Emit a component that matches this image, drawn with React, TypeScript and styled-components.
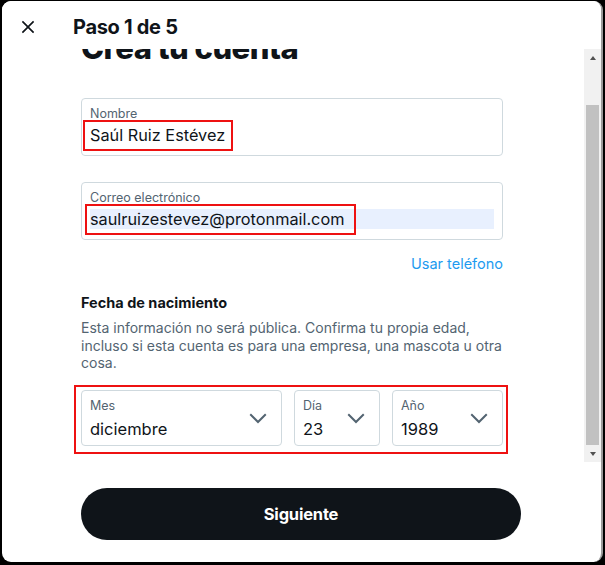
import React from "react";
import styled, { createGlobalStyle } from "styled-components";

const Global = createGlobalStyle`
  html, body { margin: 0; padding: 0; background: #000; }
  body { font-family: Inter, "Noto Sans", "Liberation Sans", sans-serif; color: #0f1419; }
  * { box-sizing: border-box; }
`;

const Dialog = styled.div`
  margin: 1px 2px 3px 2px;
  height: 561px;
  background: #fff;
  border-radius: 9px;
  border-right: 2px solid #9a9a9a;
  display: flex;
  flex-direction: column;
  overflow: hidden;
`;

const Header = styled.div`
  height: 48px;
  flex: none;
  display: flex;
  align-items: center;
  padding: 4px 0 0 16px;
  gap: 35px;
  background: #fff;
`;

const CloseButton = styled.button`
  width: 20px;
  height: 20px;
  padding: 0;
  border: 0;
  background: none;
  display: flex;
  color: #0f1419;
  svg { width: 20px; height: 20px; fill: currentColor; }
`;

const Title = styled.h2`
  margin: 0;
  font-size: 20px;
  font-weight: 700;
  letter-spacing: -0.3px;
`;

const Body = styled.div`
  flex: none;
  height: 413px;
  display: flex;
  overflow: hidden;
`;

const Scroller = styled.div`
  flex: 1;
  overflow: hidden;
  padding: 0 81px 0 79px;
`;

const ScrollContent = styled.div<{ $offset: number }>`
  margin-top: ${(p) => -p.$offset}px;
  display: flex;
  flex-direction: column;
`;

const Heading = styled.h1`
  margin: 0;
  font-size: 31px;
  line-height: 36px;
  font-weight: 800;
  letter-spacing: -0.5px;
`;

const Field = styled.div<{ $mt: number }>`
  margin-top: ${(p) => p.$mt}px;
  height: 58px;
  border: 1px solid #cfd9de;
  border-radius: 4px;
  padding: 7px 8px 0 8px;
  display: flex;
  flex-direction: column;
`;

const Label = styled.div`
  font-size: 12.5px;
  line-height: 16px;
  color: #536471;
`;

const ValueRow = styled.div<{ $filled?: boolean }>`
  margin-top: 3px;
  height: 20px;
  display: flex;
  align-items: center;
  background: ${(p) => (p.$filled ? "#e8f0fe" : "transparent")};
`;

const Value = styled.span`
  font-size: 16.3px;
  line-height: 25px;
  white-space: nowrap;
`;

const Mark = styled.span<{ $l: number; $r: number }>`
  display: inline-flex;
  align-items: center;
  border: 2px solid #ee1111;
  margin: -5px ${(p) => -p.$r}px -5px ${(p) => -p.$l}px;
  padding: 1px ${(p) => p.$r - 2}px 1px ${(p) => p.$l - 2}px;
`;

const LinkRow = styled.div`
  margin-top: 14px;
  display: flex;
  justify-content: flex-end;
`;

const Link = styled.a`
  font-size: 14.5px;
  line-height: 20px;
  color: #1d9bf0;
  text-decoration: none;
`;

const SectionTitle = styled.div`
  margin-top: 19px;
  font-size: 14.5px;
  line-height: 20px;
  font-weight: 700;
`;

const Description = styled.p`
  margin: 6px 0 0;
  font-size: 14px;
  line-height: 17.5px;
  color: #536471;
`;

const DateMark = styled.div`
  margin: 13px -5px 0 -7px;
  border: 2px solid #ee1111;
  padding: 3px 3px 6px 5px;
`;

const DateRow = styled.div`
  display: grid;
  grid-template-columns: 201px 86px 1fr;
  gap: 12px;
`;

const Select = styled.div`
  height: 56px;
  border: 1px solid #cfd9de;
  border-radius: 4px;
  padding: 7px 11px 0 8px;
  display: flex;
  align-items: center;
  justify-content: space-between;
`;

const SelectText = styled.div`
  align-self: flex-start;
  display: flex;
  flex-direction: column;
`;

const SelectValue = styled.div`
  margin-top: 3px;
  font-size: 16.5px;
  line-height: 25px;
`;

const Chevron = styled.svg`
  width: 24px;
  height: 24px;
  margin-top: -7px;
  fill: #536471;
  flex: none;
`;

const Scrollbar = styled.div`
  width: 17px;
  flex: none;
  background: #f1f1f1;
  display: flex;
  flex-direction: column;
`;

const ArrowButton = styled.div`
  height: 17px;
  flex: none;
  display: flex;
  align-items: center;
  justify-content: center;
`;

const Arrow = styled.div<{ $up?: boolean }>`
  width: 0;
  height: 0;
  border-left: 3.5px solid transparent;
  border-right: 3.5px solid transparent;
  ${(p) => (p.$up ? "border-bottom: 4px solid #505050;" : "border-top: 4px solid #505050;")}
`;

const Track = styled.div`
  flex: 1;
  display: flex;
  flex-direction: column;
  justify-content: flex-end;
  padding: 0 2px;
`;

const Thumb = styled.div`
  height: 340px;
  background: #c1c1c1;
`;

const Footer = styled.div`
  flex: 1;
  padding: 26px 80px 0 79px;
`;

const PrimaryButton = styled.button`
  width: 100%;
  height: 52px;
  border: 0;
  border-radius: 26px;
  background: #0f1419;
  color: #fff;
  font-family: inherit;
  font-size: 16.5px;
  font-weight: 700;
  letter-spacing: -0.2px;
`;

const ChevronIcon = () => (
  <Chevron viewBox="0 0 24 24">
    <path d="M3.543 8.96l1.414-1.42L12 14.59l7.043-7.05 1.414 1.42L12 17.41 3.543 8.96z" />
  </Chevron>
);

const DateSelect = ({ label, value }: { label: string; value: string }) => (
  <Select>
    <SelectText>
      <Label>{label}</Label>
      <SelectValue>{value}</SelectValue>
    </SelectText>
    <ChevronIcon />
  </Select>
);

export default function App() {
  return (
    <>
      <Global />
      <Dialog>
        <Header>
          <CloseButton aria-label="Cerrar">
            <svg viewBox="0 0 24 24">
              <path d="M10.59 12L4.54 5.96l1.42-1.42L12 10.59l6.04-6.05 1.42 1.42L13.41 12l6.05 6.04-1.42 1.42L12 13.41l-6.04 6.05-1.42-1.42L10.59 12z" />
            </svg>
          </CloseButton>
          <Title>Paso 1 de 5</Title>
        </Header>
        <Body>
          <Scroller>
            <ScrollContent $offset={19}>
              <Heading>Crea tu cuenta</Heading>
              <Field $mt={32}>
                <Label>Nombre</Label>
                <ValueRow>
                  <Mark $l={7} $r={8}>
                    <Value>Saúl Ruiz Estévez</Value>
                  </Mark>
                </ValueRow>
              </Field>
              <Field $mt={26}>
                <Label>Correo electrónico</Label>
                <ValueRow $filled>
                  <Mark $l={5} $r={12}>
                    <Value>saulruizestevez@protonmail.com</Value>
                  </Mark>
                </ValueRow>
              </Field>
              <LinkRow>
                <Link href="#">Usar teléfono</Link>
              </LinkRow>
              <SectionTitle>Fecha de nacimiento</SectionTitle>
              <Description>
                Esta información no será pública. Confirma tu propia edad, incluso si esta cuenta es para una
                empresa, una mascota u otra cosa.
              </Description>
              <DateMark>
                <DateRow>
                  <DateSelect label="Mes" value="diciembre" />
                  <DateSelect label="Día" value="23" />
                  <DateSelect label="Año" value="1989" />
                </DateRow>
              </DateMark>
            </ScrollContent>
          </Scroller>
          <Scrollbar>
            <ArrowButton>
              <Arrow $up />
            </ArrowButton>
            <Track>
              <Thumb />
            </Track>
            <ArrowButton>
              <Arrow />
            </ArrowButton>
          </Scrollbar>
        </Body>
        <Footer>
          <PrimaryButton>Siguiente</PrimaryButton>
        </Footer>
      </Dialog>
    </>
  );
}
